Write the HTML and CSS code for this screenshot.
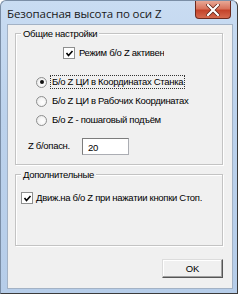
FILE: index.html
```html
<!DOCTYPE html>
<html lang="ru">
<head>
    <meta charset="UTF-8">
    <title>Безопасная высота по оси Z</title>
    <link rel="stylesheet" href="styles.css">
</head>
<body>
    <div class="window">
        <div class="titlebar">
            <span class="title">Безопасная высота по оси Z</span>
            <span class="close-btn">
                <svg width="14" height="12" viewBox="0 0 14 12">
                    <path d="M2 1 L12 11 M12 1 L2 11" stroke="#5a1f14" stroke-width="3.6" stroke-linecap="square"/>
                    <path d="M2 1 L12 11 M12 1 L2 11" stroke="#fff" stroke-width="2.2" stroke-linecap="square"/>
                </svg>
            </span>
        </div>
        <div class="client">
            <div class="group group-main">
                <span class="group-title">Общие настройки</span>
                <div class="check check-active">
                    <span class="box">
                        <svg width="9" height="9" viewBox="0 0 9 9"><path d="M1.5 4 L3.5 6.5 L7.5 2" stroke="#000" stroke-width="1.6" fill="none"/></svg>
                    </span>
                    <span class="clip">Режим б/о Z активен</span>
                </div>
                <div class="radios">
                    <div class="radio"><span class="dot on"></span><span class="label focus">Б/о Z ЦИ в Координатах Станка</span></div>
                    <div class="radio"><span class="dot"></span><span class="label">Б/о Z ЦИ в Рабочих Координатах</span></div>
                    <div class="radio"><span class="dot"></span><span class="label">Б/о Z - пошаговый подъём</span></div>
                </div>
                <div class="field">
                    <span class="field-label">Z б/опасн.</span>
                    <span class="input">20</span>
                </div>
            </div>
            <div class="group group-extra">
                <span class="group-title">Дополнительные</span>
                <div class="check check-stop">
                    <span class="box">
                        <svg width="9" height="9" viewBox="0 0 9 9"><path d="M1.5 4 L3.5 6.5 L7.5 2" stroke="#000" stroke-width="1.6" fill="none"/></svg>
                    </span>
                    <span>Движ.на б/о Z при нажатии кнопки Стоп.</span>
                </div>
            </div>
            <div class="actions">
                <button class="button">OK</button>
            </div>
        </div>
    </div>
</body>
</html>
```

FILE: styles.css
```css
body {
    margin: 0;
    padding: 0;
    background-color: #fff;
    font-family: 'Liberation Sans', sans-serif;
    font-size: 9.5px;
    letter-spacing: -0.3px;
    color: #000;
}
.window {
    width: 238px;
    height: 294px;
    box-sizing: border-box;
    display: flex;
    flex-direction: column;
    padding: 0 4px 4px 6px;
    background: linear-gradient(to bottom, #c9dcf2 0%, #bcd2ec 40%, #b6cde9 100%);
    border: 1px solid #7b8ea6;
    border-right-color: #3b3b3b;
    border-bottom-color: #3b3b3b;
    border-radius: 6px 6px 0 0;
}
.titlebar {
    height: 23px;
    display: flex;
    align-items: flex-start;
    justify-content: space-between;
}
.title {
    font-family: 'Open Sans', sans-serif;
    font-size: 11.5px;
    margin-top: 5px;
    letter-spacing: -0.1px;
    color: #1a1a1a;
}
.close-btn {
    width: 36px;
    height: 18px;
    margin-right: 2px;
    box-sizing: border-box;
    display: flex;
    justify-content: center;
    align-items: center;
    background: linear-gradient(to bottom, #e8a896 0%, #d8735c 45%, #c4432a 55%, #d56a4f 100%);
    border: 1px solid #6d2a1e;
    border-top: none;
    border-radius: 0 0 4px 4px;
}
.client {
    flex: 1;
    background-color: #f0f0f0;
    border: 1px solid #a3b2c5;
    display: flex;
    flex-direction: column;
    padding: 8px 9px 0 7px;
    white-space: nowrap;
}
.group {
    position: relative;
    box-sizing: border-box;
    border: 1px solid #c3c3c3;
    box-shadow: inset 1px 1px 0 #fff, 1px 1px 0 #fff;
}
.group-title {
    position: absolute;
    top: -7px;
    left: 5px;
    padding: 0 2px;
    line-height: 13px;
    background-color: #f0f0f0;
}
.group-main {
    height: 132px;
    display: flex;
    flex-direction: column;
}
.group-extra {
    height: 72px;
    margin-top: 9px;
}
.check {
    display: flex;
    align-items: center;
    gap: 4px;
    height: 12px;
    line-height: 12px;
}
.check-active {
    margin: 13px 0 0 47px;
    width: 103px;
}
.check-active .clip {
    overflow: hidden;
}
.check-stop {
    margin: 17px 0 0 5px;
    gap: 3px;
}
.box {
    width: 10px;
    height: 10px;
    flex: none;
    background: #fff;
    border: 1px solid #8e8f8f;
    display: flex;
    justify-content: center;
    align-items: center;
}
.radios {
    display: flex;
    flex-direction: column;
    gap: 5px;
    margin: 16px 0 0 20px;
}
.radio {
    display: flex;
    align-items: center;
    gap: 3px;
    height: 14px;
}
.dot {
    width: 11px;
    height: 11px;
    box-sizing: border-box;
    border-radius: 50%;
    border: 1px solid #8e8f8f;
    background: radial-gradient(circle at 60% 60%, #fff 0%, #f4f4f4 50%, #dcdcdc 100%);
    position: relative;
}
.dot.on::after {
    content: '';
    position: absolute;
    left: 2.5px;
    top: 2.5px;
    width: 4px;
    height: 4px;
    border-radius: 50%;
    background: #111;
}
.label {
    padding: 0 1px;
    line-height: 12px;
    border: 1px solid transparent;
}
.label.focus {
    border: 1px dotted #333;
}
.field {
    display: flex;
    align-items: center;
    margin: 11px 0 0 12px;
}
.field-label {
    width: 54px;
    margin-top: -3px;
}
.input {
    width: 47px;
    height: 17px;
    box-sizing: border-box;
    background: #fff;
    border: 1px solid #abadb3;
    border-top-color: #7c7c7c;
    border-left-color: #7c7c7c;
    padding: 3px 0 0 5px;
}
.actions {
    display: flex;
    justify-content: flex-end;
    margin-top: 13px;
}
.button {
    width: 61px;
    height: 19px;
    padding: 0;
    font-family: 'Liberation Sans', sans-serif;
    font-size: 9.5px;
    color: #000;
    background: #f0f0f0;
    border: 1px solid #dcdcdc;
    border-right-color: #555;
    border-bottom-color: #555;
    box-shadow: inset -1px -1px 0 #a0a0a0, inset 1px 1px 0 #fff;
}
```
